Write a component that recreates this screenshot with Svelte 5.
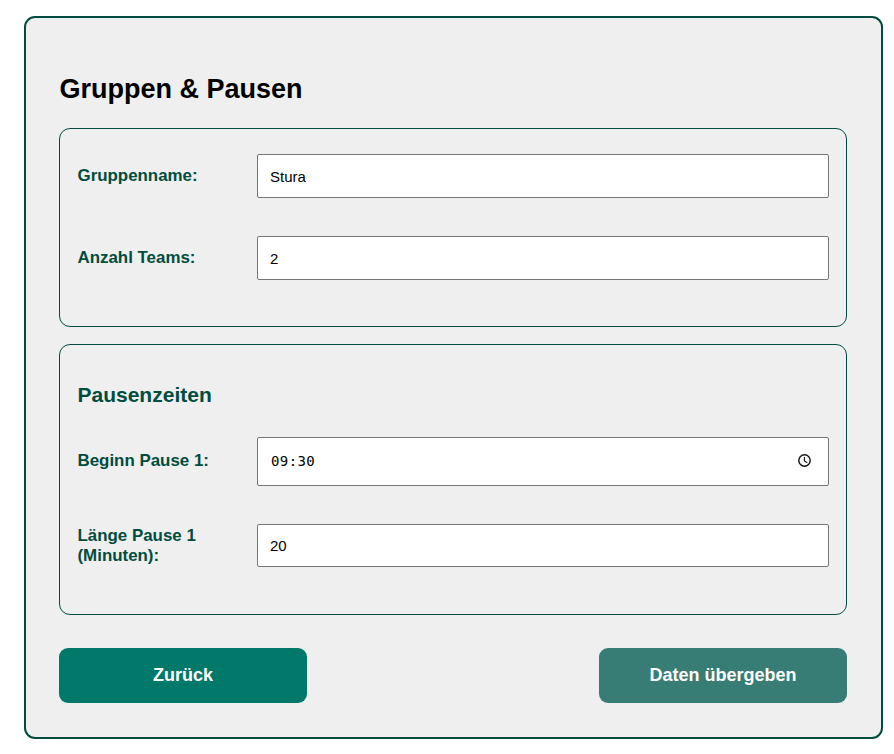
<script>
  let groupName = $state('Stura');
  let teams = $state('2');
  let start = $state('09:30');
  let duration = $state('20');
</script>

<main class="card">
  <h1>Gruppen &amp; Pausen</h1>

  <section class="panel group">
    <div class="row">
      <label for="name">Gruppenname:</label>
      <input id="name" type="text" bind:value={groupName} />
    </div>
    <div class="row">
      <label for="teams">Anzahl Teams:</label>
      <input id="teams" type="text" inputmode="numeric" bind:value={teams} />
    </div>
  </section>

  <section class="panel breaks">
    <h2>Pausenzeiten</h2>
    <div class="row time-row">
      <label for="start">Beginn Pause 1:</label>
      <div class="time">
        <input id="start" type="text" bind:value={start} />
        <svg width="15" height="15" viewBox="0 0 15 15" fill="none" stroke="#111">
          <circle cx="7.5" cy="7.5" r="5.7" stroke-width="1.4" />
          <path d="M7.4 4.1v3.8l2.9 1.8" stroke-width="1.1" />
        </svg>
      </div>
    </div>
    <div class="row last">
      <label for="duration">Länge Pause 1 (Minuten):</label>
      <input id="duration" type="text" inputmode="numeric" bind:value={duration} />
    </div>
  </section>

  <div class="actions">
    <button type="button">Zurück</button>
    <button type="button" class="submit">Daten übergeben</button>
  </div>
</main>

<style>
  :global(body) {
    background: #fff;
  }
  .card,
  .card * {
    box-sizing: border-box;
  }
  .card {
    width: 859px;
    height: 723px;
    margin: 16px 0 0 24px;
    padding: 55px 34px 0 33px;
    border: 2px solid #004d40;
    border-radius: 11px;
    background: #efefef;
    font-family: "Liberation Sans", Arial, sans-serif;
    display: flow-root;
  }
  h1 {
    margin: 0 0 23px;
    padding-left: 0.5px;
    font-size: 27px;
    line-height: 32px;
    color: #000;
  }
  .panel {
    border: 1px solid #004d40;
    border-radius: 11px;
    padding: 0 17px;
    color: #004d40;
  }
  .group {
    height: 199px;
    padding-top: 25px;
    margin-bottom: 17px;
  }
  .breaks {
    height: 271px;
    padding-top: 38px;
    margin-bottom: 33px;
  }
  h2 {
    margin: 0 0 30px;
    padding-left: 0.5px;
    font-size: 21px;
    line-height: 24px;
  }
  .row {
    display: flex;
    align-items: center;
    height: 44px;
    margin-bottom: 38px;
  }
  label {
    width: 180px;
    padding-right: 40px;
    padding-left: 0.5px;
    flex: none;
    font-size: 16.9px;
    font-weight: bold;
    line-height: 20px;
  }
  input,
  .time {
    flex: 1;
    min-width: 0;
    height: 100%;
    margin: 0;
    padding: 0 12px;
    border: 1px solid #767676;
    border-radius: 2px;
    background: #fff;
    color: #000;
    font: 15px "Liberation Sans", Arial, sans-serif;
    outline: none;
  }
  .time-row {
    height: 49px;
  }
  .time-row label {
    padding-bottom: 2px;
  }
  .time {
    display: flex;
    align-items: center;
    padding: 0 16px 2px 13px;
  }
  .time input {
    border: 0;
    padding: 0;
    font: 14px "DejaVu Sans Mono", monospace;
    letter-spacing: 0.4px;
  }
  .time svg {
    flex: none;
    margin-bottom: 1px;
  }
  .last {
    height: 43px;
  }
  .actions {
    display: flex;
    justify-content: space-between;
  }
  button {
    width: 248px;
    height: 55px;
    margin: 0;
    padding: 0;
    border: 0;
    border-radius: 9px;
    background: #00796b;
    color: #fff;
    font: bold 18px "Liberation Sans", Arial, sans-serif;
  }
  .submit {
    background: #387d75;
  }
</style>
